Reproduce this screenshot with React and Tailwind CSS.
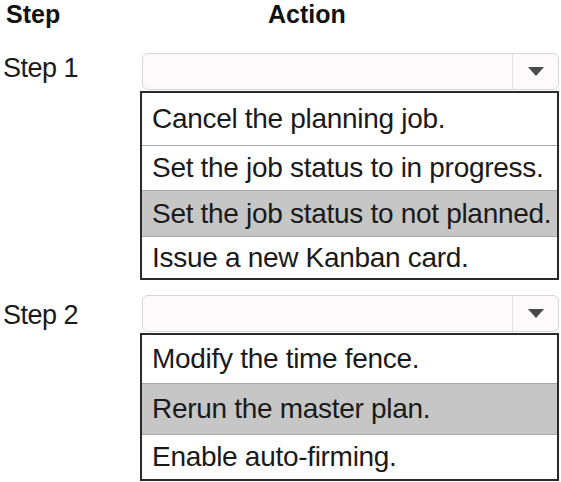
import React from "react";

function Dropdown() {
  return (
    <div className="ml-[2px] flex h-[37px] rounded-md border border-[#d6d6d6] bg-[#fcfafa]">
      <div className="flex-1" />
      <div className="flex w-[46px] items-center justify-center border-l border-[#e2e2e2]">
        <svg width="16" height="9" viewBox="0 0 16 9">
          <polygon points="0,0 16,0 8,9" fill="#4a4a4a" />
        </svg>
      </div>
    </div>
  );
}

function Row({ text, h, selected, first }) {
  return (
    <div
      className={`flex items-center pl-[10px] ${first ? "" : "border-t border-[#a8a8a8]"} ${selected ? "bg-[#c6c6c6]" : "bg-white"}`}
      style={{ height: h }}
    >
      <span className="text-[28px] leading-none tracking-[-0.3px] text-[#1a1a1a] whitespace-nowrap">{text}</span>
    </div>
  );
}

function Step({ label, labelPt, rows }) {
  return (
    <div className="flex items-start">
      <div className="w-[140px] pl-[3px]" style={{ paddingTop: labelPt }}>
        <span className="text-[27px] leading-[27px] tracking-[-0.5px] text-[#1a1a1a]">{label}</span>
      </div>
      <div className="flex w-[419px] flex-col gap-[1px]">
        <Dropdown />
        <div className="flex flex-col border-2 border-[#2a2a2a]">
          {rows.map((r, i) => (
            <Row key={i} first={i === 0} {...r} />
          ))}
        </div>
      </div>
    </div>
  );
}

export default function App() {
  return (
    <div
      className="h-[482px] w-[561px] overflow-hidden bg-white"
      style={{ fontFamily: '"Liberation Sans", Arial, sans-serif' }}
    >
      <div className="flex h-[53px] items-start pt-[2px]">
        <div className="w-[140px] pl-[6px] text-[25px] font-bold leading-[25px] text-[#111]">Step</div>
        <div className="pl-[128px] text-[25px] font-bold leading-[25px] text-[#111]">Action</div>
      </div>
      <div className="flex flex-col gap-[15px]">
        <Step
          label="Step 1"
          labelPt={2}
          rows={[
            { text: "Cancel the planning job.", h: 52 },
            { text: "Set the job status to in progress.", h: 45 },
            { text: "Set the job status to not planned.", h: 46, selected: true },
            { text: "Issue a new Kanban card.", h: 42 },
          ]}
        />
        <Step
          label="Step 2"
          labelPt={7}
          rows={[
            { text: "Modify the time fence.", h: 48 },
            { text: "Rerun the master plan.", h: 51, selected: true },
            { text: "Enable auto-firming.", h: 45 },
          ]}
        />
      </div>
    </div>
  );
}
